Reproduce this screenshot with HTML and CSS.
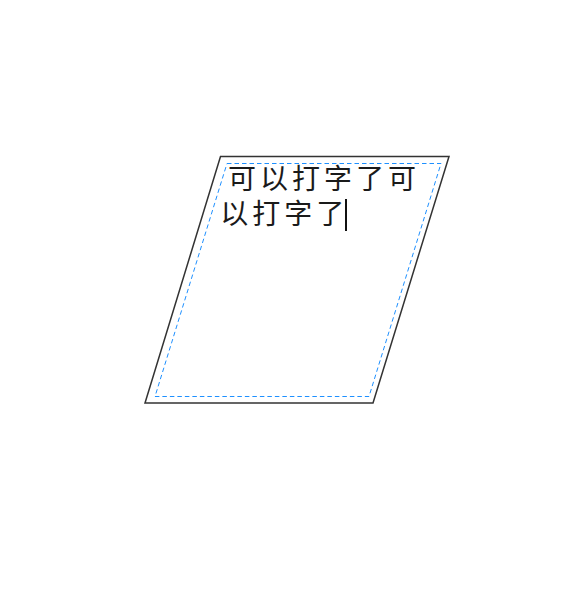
FILE: index.html
```html
<!DOCTYPE html>
<html>
<head>
<meta charset="utf-8">
<link rel="stylesheet" href="styles.css">
</head>
<body>
<div class="canvas">
  <svg class="shape" width="565" height="600" viewBox="0 0 565 600">
    <polygon class="outline" points="220.5,156.5 449,156.5 373,403 145,403"/>
    <polygon class="guide" points="227,163.5 441,163.5 369,396.5 155,396.5"/>
  </svg>
  <div class="textbox">
    <div class="edge-left"></div>
    <div class="edge-right"></div>
    <p class="text">可以打字了可以打字了<span class="caret"></span></p>
  </div>
</div>
</body>
</html>
```
FILE: styles.css
```css
html, body {
  margin: 0;
  padding: 0;
  background: #ffffff;
}
.canvas {
  position: relative;
  width: 565px;
  height: 600px;
  overflow: hidden;
}
.shape {
  position: absolute;
  left: 0;
  top: 0;
}
.outline {
  fill: none;
  stroke: #333333;
  stroke-width: 1.5;
}
.guide {
  fill: none;
  stroke: #1e90ff;
  stroke-width: 1;
  stroke-dasharray: 4.5 3;
}
.textbox {
  position: absolute;
  left: 145px;
  top: 156px;
  width: 304px;
  height: 247px;
}
.edge-left {
  float: left;
  width: 84px;
  height: 247px;
  shape-outside: polygon(0 0, 84px 0, 28px 247px, 0 247px);
}
.edge-right {
  float: right;
  width: 84px;
  height: 247px;
  shape-outside: polygon(75px 0, 84px 0, 84px 247px, 0 247px);
}
.text {
  margin: 0;
  padding-top: 4px;
  font-family: "Noto Sans CJK SC", sans-serif;
  font-size: 28px;
  font-weight: 400;
  line-height: 35px;
  letter-spacing: 4px;
  color: #1a1a1a;
}
.caret {
  display: inline-block;
  width: 1.6px;
  height: 32px;
  background: #111111;
  vertical-align: -7px;
  margin-left: -3px;
}
```
